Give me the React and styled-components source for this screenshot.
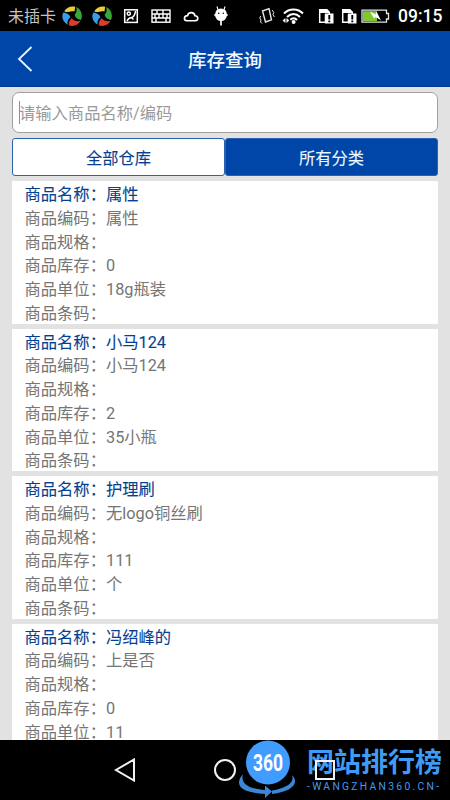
import styled, { createGlobalStyle } from 'styled-components';

const GlobalStyle = createGlobalStyle`
  * {
    box-sizing: border-box;
  }

  body {
    margin: 0;
    background-color: #000000;
    font-family: Roboto, 'Noto Sans CJK SC', sans-serif;
  }
`;

const Screen = styled.div`
  display: flex;
  flex-direction: column;
  width: 450px;
  height: 800px;
  overflow: hidden;
  background-color: #e2e2e2;
`;

const StatusBar = styled.div`
  display: flex;
  align-items: center;
  flex-shrink: 0;
  height: 31px;
  padding: 0 7px 0 8px;
  background-color: #000000;
  color: #ffffff;
`;

const Carrier = styled.span`
  width: 53px;
  padding-top: 2px;
  font-size: 16px;
  line-height: 30px;
  color: #c4c4c4;
  white-space: nowrap;
`;

const Clock = styled.span`
  margin-left: 8px;
  padding-top: 1px;
  font-size: 17.5px;
  font-weight: 500;
  line-height: 31px;
`;

const StatusIcon = styled.svg`
  flex-shrink: 0;
  width: ${(props) => props.$width}px;
  height: 22px;
  margin-left: ${(props) => props.$gap || 0}px;
`;

const Header = styled.header`
  display: grid;
  grid-template-columns: 50px 1fr 50px;
  align-items: center;
  flex-shrink: 0;
  height: 56px;
  padding-bottom: 1px;
  background-color: #0046a8;
  border-bottom: 1px solid #033b8c;
`;

const BackIcon = styled.svg`
  width: 18px;
  height: 28px;
  margin: 2px 0 0 16px;
`;

const Title = styled.h1`
  margin: 6px 0 0;
  font-size: 18.5px;
  font-weight: 500;
  line-height: 28px;
  text-align: center;
  color: #f2fbff;
`;

const Content = styled.main`
  display: flex;
  flex-direction: column;
  flex: 1;
  min-height: 0;
  padding: 4px 12px 0;
  border-top: 1px solid #d3e6f6;
  overflow: hidden;
`;

const SearchBox = styled.div`
  display: flex;
  align-items: center;
  flex-shrink: 0;
  height: 41px;
  padding-left: 6px;
  background-color: #ffffff;
  border: 1px solid #a3a09e;
  border-radius: 7px;
`;

const Caret = styled.span`
  width: 1px;
  height: 23px;
  margin-right: -1px;
  background-color: #3fb3a6;
`;

const Placeholder = styled.span`
  padding-top: 3px;
  font-size: 16.3px;
  line-height: 24px;
  color: #999999;
`;

const Tabs = styled.div`
  display: flex;
  flex-shrink: 0;
  height: 38px;
  margin: 5px 0 5px;
`;

const Tab = styled.button`
  flex: 1;
  padding: 3px 0 0;
  border: 1px solid #2a62b0;
  border-radius: 3px;
  background-color: ${(props) => (props.$active ? '#0046a8' : '#ffffff')};
  color: ${(props) => (props.$active ? '#eefaff' : '#063f90')};
  font-family: inherit;
  font-size: 16.3px;
  line-height: 33px;
  -webkit-text-stroke: 0.1px currentColor;
`;

const List = styled.div`
  display: flex;
  flex-direction: column;
  gap: 5px;
`;

const Card = styled.section`
  flex-shrink: 0;
  height: 142.5px;
  padding-left: 12.5px;
  background-color: #ffffff;
`;

const Row = styled.div`
  display: flex;
  height: 23.75px;
  font-size: 16.3px;
  line-height: 28.6px;
  color: ${(props) => (props.$name ? '#063f90' : '#757575')};
  -webkit-text-stroke: ${(props) => (props.$name ? '0.1px' : '0')} currentColor;
  white-space: nowrap;
`;

const Label = styled.span`
  width: 81.5px;
`;

const NavBar = styled.nav`
  position: relative;
  flex-shrink: 0;
  height: 60px;
  background-color: #000000;
`;

const NavButtons = styled.div`
  position: relative;
  display: flex;
  justify-content: space-between;
  align-items: center;
  height: 60px;
  padding: 0 113px;
`;

const NavIcon = styled.svg`
  width: 24px;
  height: 24px;
  fill: none;
  stroke: #f4f1ee;
  stroke-width: 2;
`;

const Watermark = styled.div`
  position: absolute;
  top: 0;
  left: 238px;
  display: flex;
`;

const WatermarkLogo = styled.svg`
  width: 60px;
  height: 60px;
`;

const WatermarkText = styled.div`
  display: flex;
  flex-direction: column;
  padding-left: 9px;
  color: #3f9bf5;
  white-space: nowrap;
`;

const SiteName = styled.span`
  height: 40px;
  font-size: 27px;
  font-weight: 700;
  line-height: 47px;
`;

const SiteUrl = styled.span`
  font-family: Roboto, sans-serif;
  font-size: 10.3px;
  letter-spacing: 2.3px;
  line-height: 14px;
`;

const products = [
  { name: '属性', code: '属性', stock: '0', unit: '18g瓶装' },
  { name: '小马124', code: '小马124', stock: '2', unit: '35小瓶' },
  { name: '护理刷', code: '无logo铜丝刷', stock: '111', unit: '个' },
  { name: '冯绍峰的', code: '上是否', stock: '0', unit: '11' },
];

const SwirlIcon = ({ gap }) => (
  <StatusIcon $width={20} $gap={gap} viewBox="0 0 20 22">
    <path d="M2.2 6.5C4.5 2 9.5 .6 13.2 1.8L12.5 6.5C10 5.5 7.5 8 2.2 6.5Z" fill="#e9cb3c" />
    <path d="M14.2 2C19 4 21.2 10 19 15C15.5 14.5 13 12.5 12.6 9.5C15 7.5 14.8 4.5 14.2 2Z" fill="#36a83a" />
    <path d="M18.5 16C15.5 20.8 11 21.8 6.8 20.2C6.6 17 7.8 15 9.6 13.2C11.5 15.5 14.5 16.6 18.5 16Z" fill="#d83d2d" />
    <path d="M5.7 19.7C.8 17 -1 12 1.3 7.6C5 8 7.5 9.5 8.4 12.2C6 14 5 17 5.7 19.7Z" fill="#3a9be8" />
  </StatusIcon>
);

const SimAlertIcon = ({ gap }) => (
  <StatusIcon $width={16} $gap={gap} viewBox="0 0 16 22">
    <path d="M1.7 17.3V4.7H8.5L11.3 7.5V10H7.5V17.3Z" fill="#000000" stroke="#ffffff" strokeWidth="1.5" />
    <path d="M1 8V4H9L12 7V8Z" fill="#ffffff" />
    <rect x="7" y="8.5" width="8.5" height="10" fill="#ffffff" />
    <path d="M11.3 10V14.5M11.3 15.5V17.2" stroke="#000000" strokeWidth="1.9" />
  </StatusIcon>
);

const StatusIcons = () => (
  <>
    <SwirlIcon gap={1} />
    <SwirlIcon gap={10} />
    <StatusIcon $width={16} $gap={11} viewBox="0 0 16 22" fill="none" stroke="#ffffff" strokeWidth="1.5">
      <rect x="1.7" y="4.8" width="12.6" height="12.6" />
      <circle cx="5.8" cy="8.6" r="1.6" />
      <path d="M4 16C5 13.5 6.5 12.8 8.5 12.5C11 12 12 10 12.5 6" />
      <path d="M8.5 12.5L10.5 14.5" />
    </StatusIcon>
    <StatusIcon $width={20} $gap={12} viewBox="0 0 20 22" fill="none" stroke="#ffffff" strokeWidth="1.4">
      <rect x="1" y="5" width="18" height="12.2" />
      <path d="M1 9H19M1 13H19M6 5V9M12 5V9M4 9V13M8 9V13M12 9V13M16 9V13M5 13V17M15 13V17" />
    </StatusIcon>
    <StatusIcon $width={16} $gap={12} viewBox="0 0 16 22" fill="none" stroke="#ffffff" strokeWidth="1.6">
      <path d="M4 15.8H12C16 15.4 15.4 11 12 10.8C11.2 6.4 5.2 6.8 4.6 10.6C.5 11 .4 15.4 4 15.8Z" />
    </StatusIcon>
    <StatusIcon $width={16} $gap={14} viewBox="0 0 16 22">
      <ellipse cx="8" cy="9.8" rx="6" ry="6.3" fill="#ffffff" />
      <path d="M4 1.5L5 5M12 1.5L11 5" stroke="#ffffff" strokeWidth="1.1" />
      <path d="M8 15V20.5M3 10H1.2M13 10H14.8" stroke="#ffffff" strokeWidth="1.7" />
      <circle cx="5.7" cy="8.3" r=".8" />
      <circle cx="10.3" cy="8.3" r=".8" />
    </StatusIcon>
    <StatusIcon $width={16} $gap={30} viewBox="0 0 16 22" fill="none" stroke="#e8e8e8" strokeWidth="1.4">
      <path d="M3.5 6L10 3.7L12.5 14.8L6.5 17Z" />
      <path d="M1.6 11L.8 13L2 15L1.5 17L3 18.5M13 5L14.8 7.5L14 9.5L15.4 12" strokeWidth="1" />
    </StatusIcon>
    <StatusIcon $width={22} $gap={7} viewBox="0 0 22 22" fill="none" stroke="#ffffff" strokeWidth="2">
      <path d="M2 8.5C7 3 16 3 21 8.5M5 12C9 8 14 8 18 12M8.3 14.7C10.5 12.7 13 12.7 15 15" />
      <circle cx="11.6" cy="17" r="1" fill="#ffffff" />
      <path d="M.8 15.5L3.2 13.5V17.5ZM7 15.5L4.7 13.5V17.5Z" fill="#ffffff" strokeWidth=".5" />
    </StatusIcon>
    <SimAlertIcon gap={14} />
    <SimAlertIcon gap={7} />
    <StatusIcon $width={29} $gap={4} viewBox="0 0 29 22">
      <path d="M1 5.2H25.5V8.5H27.5V14H25.5V17.2H1Z" fill="#000000" stroke="#e6e6e6" strokeWidth="1.3" />
      <rect x="2" y="6.2" width="14" height="10" fill="#7fc92f" />
      <path d="M9 6.5L14.5 9.5L15.5 6.5L20 15.5L14.5 12L13 13.5Z" fill="#ffffff" />
    </StatusIcon>
  </>
);

const ProductCard = ({ product }) => {
  const rows = [
    ['商品名称：', product.name],
    ['商品编码：', product.code],
    ['商品规格：', ''],
    ['商品库存：', product.stock],
    ['商品单位：', product.unit],
    ['商品条码：', ''],
  ];

  return (
    <Card>
      {rows.map(([label, value], index) => (
        <Row key={label} $name={index === 0}>
          <Label>{label}</Label>
          <span>{value}</span>
        </Row>
      ))}
    </Card>
  );
};

const App = () => {
  return (
    <>
      <GlobalStyle />
      <Screen>
        <StatusBar>
          <Carrier>未插卡</Carrier>
          <StatusIcons />
          <Clock>09:15</Clock>
        </StatusBar>
        <Header>
          <BackIcon viewBox="0 0 18 28" fill="none" stroke="#e3f5ff" strokeWidth="1.8">
            <path d="M15.5 2L3 14L15.5 26" />
          </BackIcon>
          <Title>库存查询</Title>
        </Header>
        <Content>
          <SearchBox>
            <Caret />
            <Placeholder>请输入商品名称/编码</Placeholder>
          </SearchBox>
          <Tabs>
            <Tab>全部仓库</Tab>
            <Tab $active>所有分类</Tab>
          </Tabs>
          <List>
            {products.map((product) => (
              <ProductCard key={product.name} product={product} />
            ))}
          </List>
        </Content>
        <NavBar>
          <Watermark>
            <WatermarkLogo viewBox="0 0 60 60">
              <path d="M5 34C-2 42 0 49 13 52Q19 53.5 27 54V58L34 51.5L27 45.5V50C12 49 2 44 5 34Z" fill="#3b86d6" />
              <path d="M54 35C62 43 54 51.5 34 54V50.5C48 48 57 43 54 35Z" fill="#3b86d6" />
              <circle cx="30" cy="22.5" r="22" fill="#409cff" />
              <text
                x="30"
                y="31"
                textAnchor="middle"
                textLength="30"
                lengthAdjust="spacingAndGlyphs"
                fontFamily="Roboto, sans-serif"
                fontSize="24"
                fontWeight="700"
                fill="#ffffff"
              >
                360
              </text>
            </WatermarkLogo>
            <WatermarkText>
              <SiteName>网站排行榜</SiteName>
              <SiteUrl>-WANGZHAN360.CN-</SiteUrl>
            </WatermarkText>
          </Watermark>
          <NavButtons>
            <NavIcon viewBox="0 0 24 24">
              <path d="M21 1.5V22.5L3 12Z" />
            </NavIcon>
            <NavIcon viewBox="0 0 24 24">
              <circle cx="12" cy="12" r="10" />
            </NavIcon>
            <NavIcon viewBox="0 0 24 24">
              <rect x="3" y="3" width="18" height="18" />
            </NavIcon>
          </NavButtons>
        </NavBar>
      </Screen>
    </>
  );
};

export default App;
